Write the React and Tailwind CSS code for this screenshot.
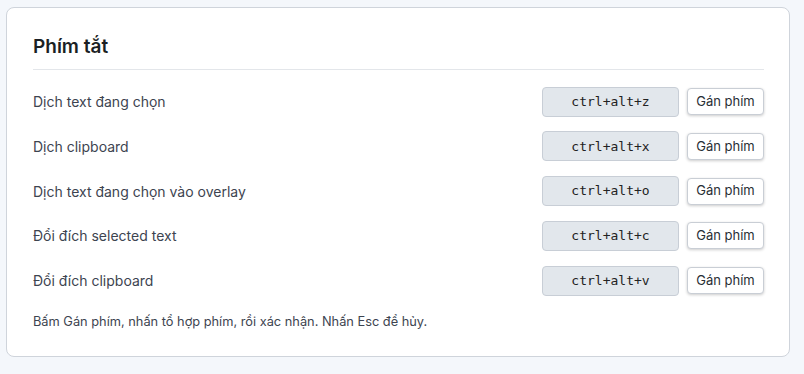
import React from "react";

const shortcuts = [
  { label: "Dịch text đang chọn", keys: "ctrl+alt+z" },
  { label: "Dịch clipboard", keys: "ctrl+alt+x" },
  { label: "Dịch text đang chọn vào overlay", keys: "ctrl+alt+o" },
  { label: "Đổi đích selected text", keys: "ctrl+alt+c" },
  { label: "Đổi đích clipboard", keys: "ctrl+alt+v" },
];

export default function App() {
  return (
    <div className="min-h-screen w-full bg-[#f4f7fb] pt-[7px] pl-[6px] font-['Inter',sans-serif]">
      <div className="w-[784px] h-[350px] rounded-lg border border-[#cfd4db] bg-white pl-[26px] pr-[25px] pt-[25px] pb-6">
        <h2 className="text-[19px] font-semibold leading-7 text-[#1b1f24] pb-2 border-b border-[#e3e6ea]">
          Phím tắt
        </h2>
        <div className="mt-[17px] flex flex-col gap-[15.75px]">
          {shortcuts.map((s) => (
            <div key={s.keys} className="flex items-center h-[29px]">
              <span className="flex-1 text-[14px] text-[#3d4450]">{s.label}</span>
              <div className="w-[137px] h-[30px] rounded border border-[#c8ced6] bg-[#e2e7ec] flex items-center justify-center font-['DejaVu_Sans_Mono',monospace] text-[13px] text-[#222]">
                {s.keys}
              </div>
              <button className="ml-[8px] w-[77px] h-[27px] rounded border border-[#c9ced5] bg-white shadow-[0_1px_3px_rgba(0,0,0,0.2)] text-[13px] text-[#2a2f36]">
                Gán phím
              </button>
            </div>
          ))}
        </div>
        <p className="mt-[17px] text-[12.8px] leading-5 text-[#3d4450]">
          Bấm Gán phím, nhấn tổ hợp phím, rồi xác nhận. Nhấn Esc để hủy.
        </p>
      </div>
    </div>
  );
}
